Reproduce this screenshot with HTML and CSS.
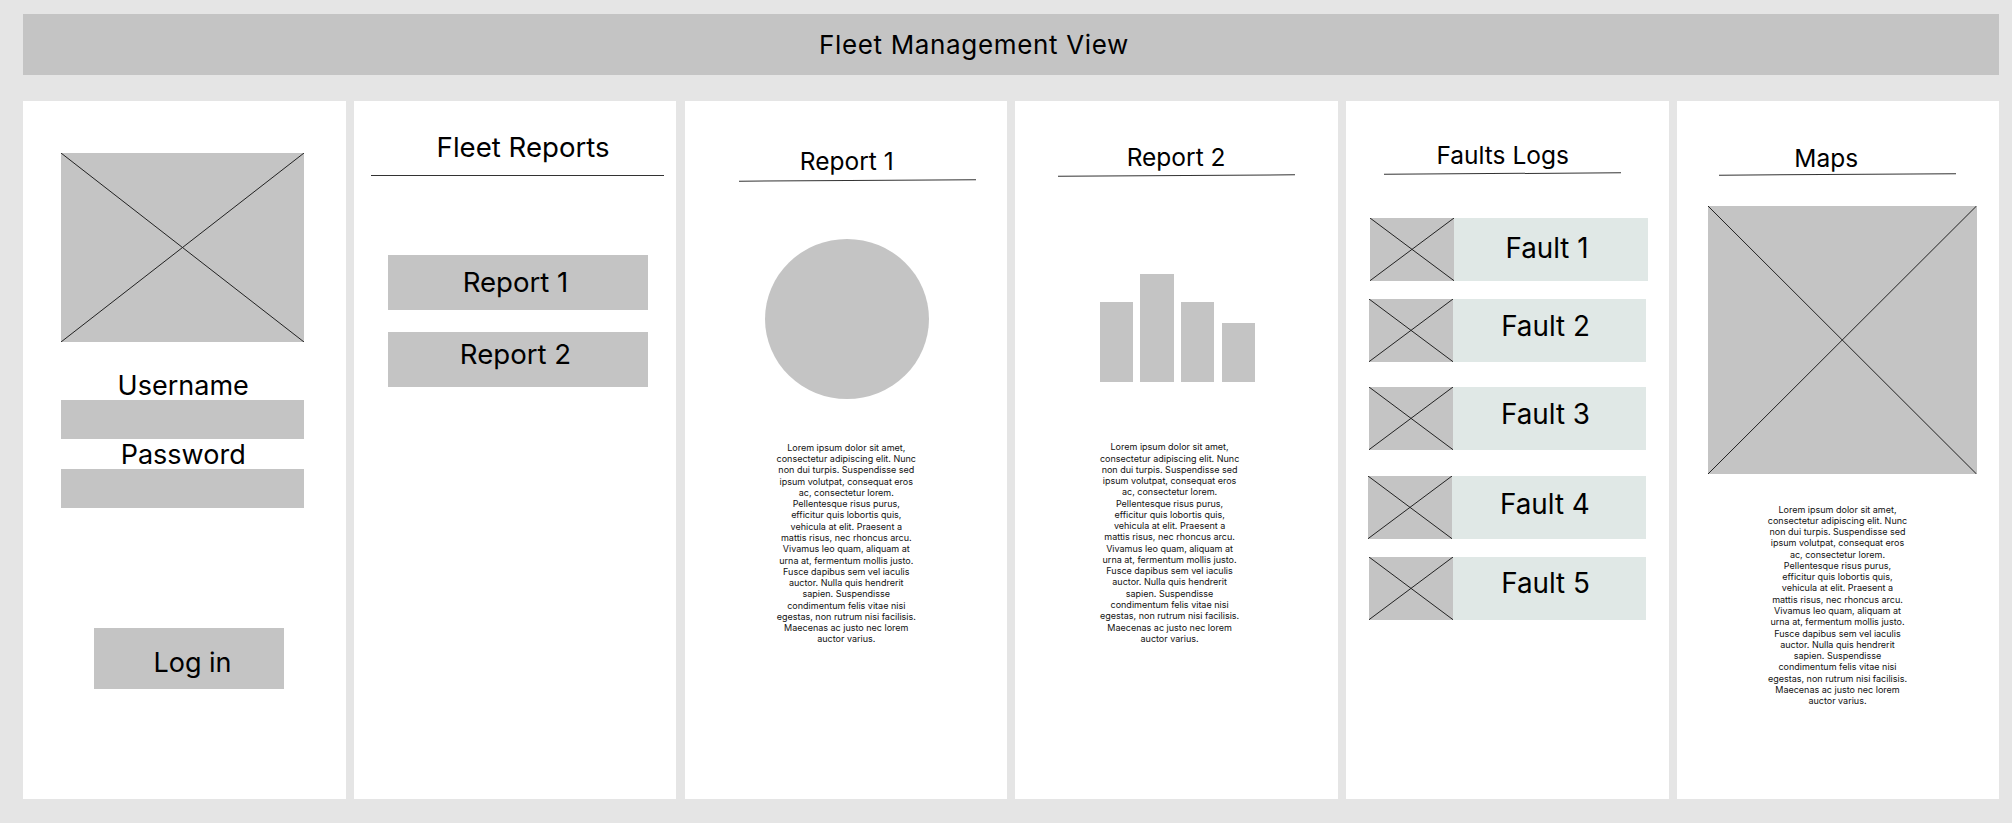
FILE: index.html
```html
<!DOCTYPE html>
<html lang="en">
  <head>
    <meta charset="UTF-8" />
    <title>Fleet Management View</title>
    <link rel="stylesheet" href="styles.css">
  </head>
  <body>
    <header class="topbar">Fleet Management View</header>

    <main class="board">
      <!-- Login -->
      <section class="panel login">
        <svg class="ph login-logo" viewBox="0 0 100 100" preserveAspectRatio="none"><path d="M0 0L100 100M100 0L0 100" /></svg>
        <label class="field-label first">Username</label>
        <div class="field"></div>
        <label class="field-label">Password</label>
        <div class="field"></div>
        <div class="login-btn"><span>Log in</span></div>
      </section>

      <!-- Report list -->
      <section class="panel reports">
        <div class="head">
          <h2 class="title big">Fleet Reports</h2>
          <div class="rule flat"></div>
        </div>
        <div class="report-btn one">Report 1</div>
        <div class="report-btn two">Report 2</div>
      </section>

      <!-- Report 1 -->
      <section class="panel report-one">
        <div class="head">
          <h2 class="title">Report 1</h2>
          <div class="rule"></div>
        </div>
        <div class="circle"></div>
        <p class="lorem">Lorem ipsum dolor sit amet, consectetur adipiscing elit. Nunc non dui turpis. Suspendisse sed ipsum volutpat, consequat eros ac, consectetur lorem. Pellentesque risus purus, efficitur quis lobortis quis, vehicula at elit. Praesent a<br />mattis risus, nec rhoncus arcu. Vivamus leo quam, aliquam at urna at, fermentum mollis justo. Fusce dapibus sem vel iaculis auctor. Nulla quis hendrerit sapien. Suspendisse condimentum felis vitae nisi egestas, non rutrum nisi facilisis. Maecenas ac justo nec lorem auctor varius.</p>
      </section>

      <!-- Report 2 -->
      <section class="panel report-two">
        <div class="head">
          <h2 class="title">Report 2</h2>
          <div class="rule"></div>
        </div>
        <div class="bars">
          <div class="bar" style="height: 80.6px"></div>
          <div class="bar" style="height: 108px"></div>
          <div class="bar" style="height: 80.6px"></div>
          <div class="bar" style="height: 59px"></div>
        </div>
        <p class="lorem">Lorem ipsum dolor sit amet, consectetur adipiscing elit. Nunc non dui turpis. Suspendisse sed ipsum volutpat, consequat eros ac, consectetur lorem. Pellentesque risus purus, efficitur quis lobortis quis, vehicula at elit. Praesent a<br />mattis risus, nec rhoncus arcu. Vivamus leo quam, aliquam at urna at, fermentum mollis justo. Fusce dapibus sem vel iaculis auctor. Nulla quis hendrerit sapien. Suspendisse condimentum felis vitae nisi egestas, non rutrum nisi facilisis. Maecenas ac justo nec lorem auctor varius.</p>
      </section>

      <!-- Faults -->
      <section class="panel faults">
        <div class="head">
          <h2 class="title">Faults Logs</h2>
          <div class="rule"></div>
        </div>
        <div class="fault">
          <svg class="ph" viewBox="0 0 100 100" preserveAspectRatio="none"><path d="M0 0L100 100M100 0L0 100" /></svg>
          <div class="fault-name">Fault 1</div>
        </div>
        <div class="fault">
          <svg class="ph" viewBox="0 0 100 100" preserveAspectRatio="none"><path d="M0 0L100 100M100 0L0 100" /></svg>
          <div class="fault-name">Fault 2</div>
        </div>
        <div class="fault">
          <svg class="ph" viewBox="0 0 100 100" preserveAspectRatio="none"><path d="M0 0L100 100M100 0L0 100" /></svg>
          <div class="fault-name">Fault 3</div>
        </div>
        <div class="fault">
          <svg class="ph" viewBox="0 0 100 100" preserveAspectRatio="none"><path d="M0 0L100 100M100 0L0 100" /></svg>
          <div class="fault-name">Fault 4</div>
        </div>
        <div class="fault">
          <svg class="ph" viewBox="0 0 100 100" preserveAspectRatio="none"><path d="M0 0L100 100M100 0L0 100" /></svg>
          <div class="fault-name">Fault 5</div>
        </div>
      </section>

      <!-- Maps -->
      <section class="panel maps">
        <div class="head">
          <h2 class="title">Maps</h2>
          <div class="rule"></div>
        </div>
        <svg class="ph map-img" viewBox="0 0 100 100" preserveAspectRatio="none"><path d="M0 0L100 100M100 0L0 100" /></svg>
        <p class="lorem">Lorem ipsum dolor sit amet, consectetur adipiscing elit. Nunc non dui turpis. Suspendisse sed ipsum volutpat, consequat eros ac, consectetur lorem. Pellentesque risus purus, efficitur quis lobortis quis, vehicula at elit. Praesent a<br />mattis risus, nec rhoncus arcu. Vivamus leo quam, aliquam at urna at, fermentum mollis justo. Fusce dapibus sem vel iaculis auctor. Nulla quis hendrerit sapien. Suspendisse condimentum felis vitae nisi egestas, non rutrum nisi facilisis. Maecenas ac justo nec lorem auctor varius.</p>
      </section>
    </main>
  </body>
</html>
```

FILE: styles.css
```css
* {
  margin: 0;
  padding: 0;
  box-sizing: border-box;
}
html,
body {
  height: 100%;
  overflow: hidden;
}
body {
  background: #e5e5e5;
  color: #000;
  font-family: Inter, "Liberation Sans", sans-serif;
  padding: 14px 13px 24px 23px;
  display: flex;
  flex-direction: column;
  gap: 26px;
}

.topbar {
  height: 61px;
  flex: none;
  background: #c4c4c4;
  display: flex;
  align-items: center;
  justify-content: center;
  padding: 0 74px 1px 0;
  font-size: 26px;
  letter-spacing: 0.65px;
}

.board {
  flex: 1;
  display: grid;
  grid-template-columns: repeat(6, 322.5px);
  column-gap: 8.3px;
}
.panel {
  background: #fff;
  overflow: hidden;
}

/* grey placeholder with a cross */
.ph {
  display: block;
  background: #c4c4c4;
}
.ph path {
  fill: none;
  stroke: #222;
  stroke-width: 1px;
  vector-effect: non-scaling-stroke;
}

/* panel headings */
.head {
  width: 237px;
}
.title {
  font-size: 24.5px;
  font-weight: 400;
  line-height: 28px;
  text-align: center;
}
.title.big {
  font-size: 27.6px;
  line-height: 30px;
}
.rule {
  height: 1px;
  background: #333;
  transform: rotate(-0.33deg);
}
.rule.flat {
  transform: none;
  margin-top: 13.5px;
}

/* login */
.login-logo {
  width: 243px;
  height: 189px;
  margin: 52px 0 0 37.7px;
}
.field-label {
  display: block;
  width: 243px;
  margin: 2px 0 0 37.7px;
  padding-left: 2px;
  font-size: 27px;
  line-height: 28px;
  text-align: center;
}
.field-label.first {
  margin-top: 30.4px;
}
.field {
  width: 243px;
  height: 38.6px;
  margin-left: 37.7px;
  background: #c4c4c4;
}
.login-btn {
  width: 190px;
  height: 61px;
  margin: 120px 0 0 71px;
  background: #c4c4c4;
  display: flex;
  align-items: center;
  justify-content: center;
  padding: 8px 0 0 7px;
  font-size: 27px;
}

/* fleet reports */
.reports {
  padding-top: 30.5px;
}
.reports .head {
  width: 293px;
  margin-left: 17px;
}
.reports .title {
  padding-left: 11.6px;
}
.report-btn {
  width: 260px;
  height: 55px;
  margin-left: 34.7px;
  background: #c4c4c4;
  display: flex;
  align-items: center;
  justify-content: center;
  padding-right: 6px;
  font-size: 27.6px;
}
.report-btn.one {
  margin-top: 78.5px;
  padding-bottom: 1px;
}
.report-btn.two {
  margin-top: 22px;
  padding-bottom: 11px;
}

/* lorem copy under the charts */
.lorem {
  width: 141px;
  font-size: 9px;
  line-height: 11.27px;
  text-align: center;
  color: #111;
}

/* report 1 */
.report-one {
  padding-top: 46.2px;
}
.report-one .head {
  margin-left: 54.7px;
}
.report-one .title {
  padding-right: 22px;
}
.report-one .rule {
  margin-top: 5px;
}
.circle {
  width: 164px;
  height: 160px;
  margin: 58px 0 0 80.3px;
  background: #c4c4c4;
  border-radius: 50%;
}
.report-one .lorem {
  margin: 42.7px 0 0 91.2px;
}

/* report 2 */
.report-two {
  padding-top: 42px;
}
.report-two .head {
  margin-left: 42.2px;
}
.report-two .rule {
  margin-top: 4.3px;
}
.bars {
  height: 108px;
  margin: 98px 0 0 84.2px;
  display: flex;
  align-items: flex-end;
  gap: 7.6px;
}
.bar {
  width: 33.2px;
  background: #c4c4c4;
}
.report-two .lorem {
  margin: 59px 0 0 83.7px;
}

/* faults */
.faults {
  padding-top: 40px;
}
.faults .head {
  margin-left: 38px;
}
.faults .rule {
  margin-top: 4.2px;
}
.fault {
  width: 278px;
  height: 62.7px;
  margin-left: 23.6px;
  background: #e0e8e6;
  display: flex;
}
.fault .ph {
  width: 84px;
  height: 100%;
  flex: none;
}
.fault-name {
  flex: 1;
  display: flex;
  align-items: center;
  justify-content: center;
  padding: 0 8px 10px 0;
  font-size: 27.8px;
}
.fault:nth-of-type(2) {
  margin-top: 44px;
  width: 278.4px;
}
.fault:nth-of-type(2) .fault-name {
  padding-bottom: 3px;
}
.fault:nth-of-type(3) {
  margin-top: 18.6px;
  margin-left: 22.7px;
  width: 277.3px;
}
.fault:nth-of-type(4) {
  margin-top: 25.3px;
  margin-left: 22.7px;
  width: 277.3px;
}
.fault:nth-of-type(5) {
  margin-top: 25.7px;
  margin-left: 21.4px;
  width: 278.6px;
}
.fault:nth-of-type(5) .fault-name {
  padding-bottom: 7px;
}
.fault:nth-of-type(6) {
  margin-top: 18.6px;
  margin-left: 22.7px;
  width: 277.3px;
}

/* maps */
.maps {
  padding-top: 42.9px;
}
.maps .head {
  margin-left: 42.5px;
}
.maps .title {
  padding-right: 23.6px;
}
.maps .rule {
  margin-top: 2.4px;
}
.map-img {
  width: 268.5px;
  height: 268px;
  margin: 30.3px 0 0 31.5px;
}
.maps .lorem {
  margin: 30px 0 0 90px;
}
```
